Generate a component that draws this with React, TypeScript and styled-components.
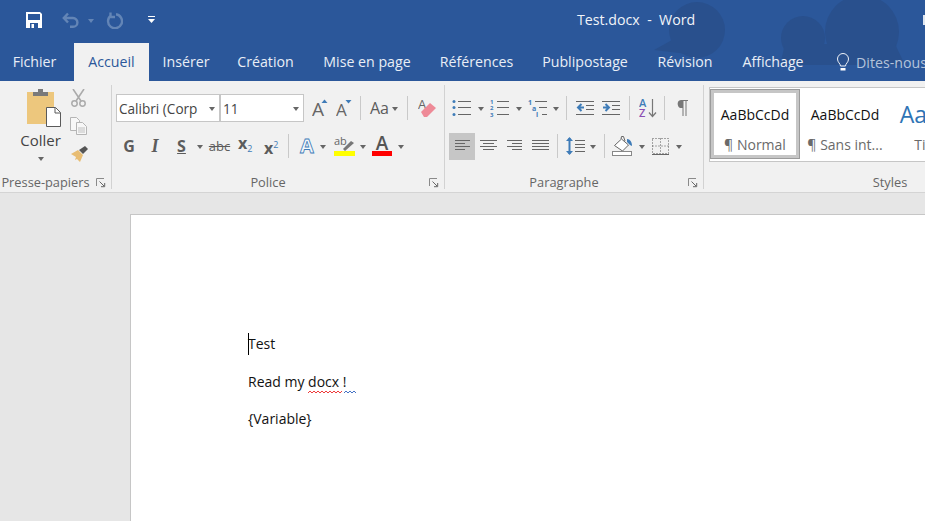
import React from "react";
import styled, { createGlobalStyle } from "styled-components";

const UI = `"Open Sans", "Noto Sans", sans-serif`;
const DOC = `"Open Sans", "Noto Sans", sans-serif`;
const BLUE = "#2b579a";
const GRAY = "#666666";
const ACCENT = "#3f7cb8";

const Global = createGlobalStyle`
  html, body { margin: 0; padding: 0; height: 521px; overflow: hidden; background: #e6e6e6; }
  #root { height: 521px; overflow: hidden; }
  * { box-sizing: border-box; }
`;

const Window = styled.div`
  width: 925px;
  height: 521px;
  display: flex;
  flex-direction: column;
  overflow: hidden;
  font-family: ${UI};
`;

/* header */
const Header = styled.header`
  position: relative;
  height: 81px;
  flex: none;
  background: ${BLUE};
  overflow: hidden;
`;
const Clouds = styled.svg`
  position: absolute;
  left: 0;
  top: 0;
`;
const TitleBar = styled.div`
  position: relative;
  height: 43px;
  display: flex;
  align-items: center;
  padding: 0 0 3px 26px;
`;
const Title = styled.div`
  position: absolute;
  left: 577px;
  top: 10px;
  color: #f1f4f9;
  font-size: 14.2px;
  line-height: 20px;
  white-space: pre;
`;
const WindowMark = styled.span`
  position: absolute;
  right: 0;
  top: 15px;
  width: 2px;
  height: 10px;
  background: #dfe6f0;
`;
const Tabs = styled.nav`
  position: relative;
  height: 38px;
  display: flex;
`;
const Tab = styled.div<{ $w: number; $active?: boolean }>`
  width: ${(p) => p.$w}px;
  flex: none;
  text-align: center;
  font-size: 14.2px;
  line-height: 37px;
  white-space: nowrap;
  color: ${(p) => (p.$active ? BLUE : "#e9eef6")};
  background: ${(p) => (p.$active ? "#f1f1f1" : "transparent")};
`;
const TabGap = styled.span`
  width: 5px;
  flex: none;
`;
const Search = styled.div`
  display: flex;
  align-items: center;
  margin-left: 16px;
  gap: 5px;
  color: #b4c4dc;
  font-size: 14.2px;
  white-space: nowrap;
`;

/* ribbon */
const Ribbon = styled.section`
  height: 112px;
  flex: none;
  display: flex;
  padding: 4px 0 3px;
  background: #f1f1f1;
  border-bottom: 1px solid #d4d4d4;
  overflow: hidden;
`;
const Group = styled.div<{ $w: number; $open?: boolean }>`
  position: relative;
  width: ${(p) => p.$w}px;
  flex: none;
  display: flex;
  flex-direction: column;
  border-right: ${(p) => (p.$open ? "none" : "1px solid #d2d2d2")};
`;
const GroupBody = styled.div`
  flex: 1;
  min-height: 0;
`;
const GroupLabel = styled.div`
  height: 14px;
  padding-right: 20px;
  text-align: center;
  color: ${GRAY};
  font-size: 12.8px;
  line-height: 14px;
  white-space: nowrap;
`;
const Launcher = styled.svg`
  position: absolute;
  right: 5px;
  bottom: 1px;
`;
const ClipBody = styled(GroupBody)`
  display: flex;
`;
const Paste = styled.div`
  width: 51px;
  margin-left: 15px;
  display: flex;
  flex-direction: column;
  align-items: center;
  padding-top: 4px;
`;
const PasteLabel = styled.div`
  margin-top: 3px;
  color: #444;
  font-size: 15px;
  line-height: 20px;
`;
const ClipTools = styled.div`
  margin-left: 4px;
  padding-top: 4px;
  display: flex;
  flex-direction: column;
  gap: 10px;
`;
const Rows = styled(GroupBody)<{ $pl?: number }>`
  padding: 9px 0 0 ${(p) => p.$pl ?? 0}px;
  display: flex;
  flex-direction: column;
  gap: 10px;
`;
const Row = styled.div`
  height: 28px;
  display: flex;
  align-items: center;
`;
const Combo = styled.div<{ $w: number; $ml?: number }>`
  width: ${(p) => p.$w}px;
  height: 28px;
  flex: none;
  margin-left: ${(p) => p.$ml ?? 0}px;
  display: flex;
  align-items: center;
  justify-content: space-between;
  padding: 0 4px 0 2px;
  background: #fff;
  border: 1px solid #c6c6c6;
  color: #444;
  font-family: ${DOC};
  font-size: 13.6px;
  white-space: nowrap;
`;
const Glyph = styled.svg<{ $ml?: number; $mt?: number }>`
  display: block;
  flex: none;
  margin-left: ${(p) => p.$ml ?? 0}px;
  margin-top: ${(p) => p.$mt ?? 0}px;
`;
const Caret = styled.span<{ $ml?: number; $mt?: number; $faded?: boolean }>`
  flex: none;
  width: 0;
  height: 0;
  margin-left: ${(p) => p.$ml ?? 0}px;
  margin-top: ${(p) => p.$mt ?? 0}px;
  border-left: 3.5px solid transparent;
  border-right: 3.5px solid transparent;
  border-top: 4px solid ${(p) => (p.$faded ? "#6385b6" : "#666")};
`;
const VSep = styled.span<{ $ml: number }>`
  flex: none;
  width: 1px;
  height: 24px;
  margin-left: ${(p) => p.$ml}px;
  background: #c9c9c9;
`;
const Tool = styled.span<{ $ml?: number; $w: number }>`
  flex: none;
  width: ${(p) => p.$w}px;
  margin-left: ${(p) => p.$ml ?? 0}px;
  text-align: center;
  color: #5c5c5c;
  font-size: 16px;
  line-height: 20px;
  white-space: nowrap;
`;
const BoldTool = styled(Tool)`
  font-weight: 700;
`;
const ItalicTool = styled(BoldTool)`
  font-style: italic;
  font-family: "Liberation Serif", serif;
  font-size: 18px;
`;
const UnderTool = styled(BoldTool)`
  text-decoration: underline;
`;
const StrikeTool = styled(Tool)`
  font-size: 13px;
  text-decoration: line-through;
`;
const Script = styled.span<{ $up?: boolean }>`
  color: ${ACCENT};
  font-size: 9px;
  font-weight: 400;
  vertical-align: ${(p) => (p.$up ? "6px" : "-3px")};
`;
const Pressed = styled.span<{ $ml: number }>`
  flex: none;
  width: 26px;
  height: 27px;
  margin-left: ${(p) => p.$ml}px;
  display: flex;
  align-items: center;
  justify-content: center;
  background: #c6c6c6;
`;

/* styles gallery */
const GalleryBody = styled(GroupBody)`
  padding: 2px 0 0 5px;
  overflow: hidden;
`;
const Gallery = styled.div`
  width: 500px;
  height: 75px;
  display: flex;
  padding: 1px 0 0;
  background: #fff;
  border: 1px solid #c6c6c6;
  border-right: none;
`;
const StyleItem = styled.div<{ $selected?: boolean }>`
  width: 90px;
  height: 70px;
  flex: none;
  display: flex;
  flex-direction: column;
  align-items: center;
  border: ${(p) => (p.$selected ? "4px solid #c6c6c6" : "4px solid transparent")};
  outline: ${(p) => (p.$selected ? "1px solid #9b9b9b" : "none")};
  outline-offset: -1px;
`;
const Sample = styled.div<{ $heading?: boolean }>`
  height: 42px;
  display: flex;
  align-items: center;
  font-family: ${DOC};
  font-size: ${(p) => (p.$heading ? "23px" : "14px")};
  color: ${(p) => (p.$heading ? "#2e74b5" : "#111")};
  white-space: nowrap;
`;
const StyleName = styled.div`
  color: #6a6a6a;
  font-size: 14px;
  line-height: 20px;
  white-space: nowrap;
`;

/* document */
const Workspace = styled.main`
  flex: 1;
  min-height: 0;
  padding: 21px 0 0 130px;
  background: #e6e6e6;
  overflow: hidden;
`;
const Page = styled.article`
  height: 400px;
  margin-right: -40px;
  padding: 119px 0 0 117px;
  background: #fff;
  border: 1px solid #c6c6c6;
  border-bottom: none;
`;
const Para = styled.p`
  position: relative;
  margin: 0 0 17.5px;
  color: #111;
  font-family: ${DOC};
  font-size: 14px;
  line-height: 20px;
`;
const Cursor = styled.span`
  position: absolute;
  left: 0;
  top: -1px;
  width: 1px;
  height: 22px;
  background: #000;
`;
const Flagged = styled.span`
  position: relative;
`;
const Squiggle = styled.svg`
  position: absolute;
  left: 0;
  bottom: -3px;
`;

const Bars = ({ ml, w, lines }: { ml?: number; w: number; lines: [number, number][] }) => (
  <Glyph $ml={ml} width={w} height={18} viewBox={`0 0 ${w} 18`}>
    {lines.map(([x, l], i) => (
      <rect key={i} x={x} y={3 + i * 3} width={l} height={1} fill="#666" />
    ))}
  </Glyph>
);

const ListLines = ({ x, w }: { x: number; w: number }) => (
  <>
    <rect x={x} y={2} width={w - x} height={1} fill="#666" />
    <rect x={x} y={8} width={w - x} height={1} fill="#666" />
    <rect x={x} y={15} width={w - x} height={1} fill="#666" />
  </>
);

const LauncherIcon = () => (
  <Launcher width={10} height={10} viewBox="0 0 10 10">
    <path d="M.5 8V.5H8" fill="none" stroke="#8a8a8a" />
    <path d="M3.5 3.5l4.5 4.5M8.7 5v3.7H5" fill="none" stroke="#666" />
  </Launcher>
);

export default function App() {
  return (
    <Window>
      <Global />
      <Header>
        <Clouds width={925} height={65} viewBox="0 0 925 65">
          <g fill="#29508d">
            <circle cx="697" cy="30" r="28" />
            <path d="M672 40l-18 10 34 4z" />
            <circle cx="803" cy="38" r="22" />
            <circle cx="862" cy="32" r="37" />
            <path d="M785 44h110l10 21H780z" />
          </g>
        </Clouds>
        <TitleBar>
          <Glyph width={16} height={16} viewBox="0 0 16 16">
            <path d="M0 0h14l2 2v14H0z" fill="#fff" />
            <rect x="2" y="2" width="12" height="6" fill={BLUE} />
            <rect x="4" y="11" width="8" height="5" fill={BLUE} />
            <rect x="5.5" y="12" width="2.5" height="4" fill="#fff" />
          </Glyph>
          <Glyph $ml={20} width={18} height={16} viewBox="0 0 18 16">
            <path d="M2 6h9a4.4 4.4 0 0 1 0 8.8H8M6 1.5 1.800 6 6 10.5" fill="none" stroke="#6385b6" strokeWidth="2.4" />
          </Glyph>
          <Caret $ml={8} $mt={2} $faded />
          <Glyph $ml={12} width={17} height={17} viewBox="0 0 17 17">
            <path d="M5 3.5a7 7 0 1 0 5-1.200M4.5 .5v4.5H9" fill="none" stroke="#6385b6" strokeWidth="2.4" />
          </Glyph>
          <Glyph $ml={25} width={7} height={8} viewBox="0 0 7 8">
            <path d="M0 0h7v1H0zM0 3h7L3.5 7z" fill="#fff" />
          </Glyph>
          <Title>Test.docx  -  Word</Title>
          <WindowMark />
        </TitleBar>
        <Tabs>
          <Tab $w={69}>Fichier</Tab>
          <TabGap />
          <Tab $w={75} $active>
            Accueil
          </Tab>
          <Tab $w={74}>Insérer</Tab>
          <Tab $w={85}>Création</Tab>
          <Tab $w={118}>Mise en page</Tab>
          <Tab $w={101}>Références</Tab>
          <Tab $w={116}>Publipostage</Tab>
          <Tab $w={84}>Révision</Tab>
          <Tab $w={92}>Affichage</Tab>
          <Search>
            <Glyph width={16} height={19} viewBox="0 0 16 19">
              <path d="M5.500 13c0-2.500-3-3.500-3-7a5.500 5.500 0 0 1 11 0c0 3.500-3 4.500-3 7z" fill="none" stroke="#eef2f8" />
              <rect x="5.5" y="15" width="5" height="2.5" fill="#fff" />
            </Glyph>
            <span>Dites-nous</span>
          </Search>
        </Tabs>
      </Header>

      <Ribbon>
        <Group $w={112}>
          <ClipBody>
            <Paste>
              <Glyph $ml={7} width={34} height={38} viewBox="0 0 34 38">
                <path d="M0 3h27v32H0z" fill="#edc77d" />
                <path d="M6 7V3h5V0h5v3h5v4z" fill="#7a7a7a" />
                <path d="M19.5 18.5h9l5 5v14h-14z" fill="#fff" stroke="#5a5a5a" />
                <path d="M28 18.5v5.500h5.500" fill="none" stroke="#5a5a5a" />
              </Glyph>
              <PasteLabel>Coller</PasteLabel>
              <Caret $mt={7} />
            </Paste>
            <ClipTools>
              <Glyph width={17} height={18} viewBox="0 0 17 18">
                <path d="M3 0l8 12M14 0L6 12" stroke="#ababab" strokeWidth="1.6" fill="none" />
                <circle cx="4.5" cy="14.5" r="2.7" fill="none" stroke="#ababab" strokeWidth="1.5" />
                <circle cx="12.5" cy="14.5" r="2.7" fill="none" stroke="#ababab" strokeWidth="1.5" />
              </Glyph>
              <Glyph width={17} height={18} viewBox="0 0 17 18">
                <path d="M.5.5h6l3 3v10h-9z" fill="#f7f7f7" stroke="#b5b5b5" />
                <path d="M6.5 5.5h6l4 4v8h-10z" fill="#f7f7f7" stroke="#b5b5b5" />
                <path d="M8 11h7M8 13h7M8 15h7" stroke="#c0c0c0" />
              </Glyph>
              <Glyph $ml={1} $mt={1} width={17} height={16} viewBox="0 0 17 16">
                <path d="M0 8l7-4 5 5-3 7-3-3-2 1 1-3z" fill="#e8bd73" />
                <path d="M8 4l4 4 5-5-3-3z" fill="#555" />
              </Glyph>
            </ClipTools>
          </ClipBody>
          <GroupLabel>Presse-papiers</GroupLabel>
          <LauncherIcon />
        </Group>

        <Group $w={333}>
          <Rows $pl={4}>
            <Row>
              <Combo $w={104}>
                Calibri (Corp
                <Caret $mt={1} />
              </Combo>
              <Combo $w={84}>
                11
                <Caret $mt={1} />
              </Combo>
              <Glyph $ml={8} width={16} height={18} viewBox="0 0 16 18">
                <text x="0" y="17" fontFamily={UI} fontSize="19" fill="#666">A</text>
                <path d="M9.5 4l3-3.500 3 3.500z" fill={ACCENT} />
              </Glyph>
              <Glyph $ml={8} width={16} height={18} viewBox="0 0 16 18">
                <text x="0" y="17" fontFamily={UI} fontSize="17" fill="#666">A</text>
                <path d="M9.5 1l3 3.500 3-3.500z" fill={ACCENT} />
              </Glyph>
              <VSep $ml={8} />
              <Tool $ml={9} $w={18}>Aa</Tool>
              <Caret $ml={4} $mt={1} />
              <VSep $ml={9} />
              <Glyph $ml={10} width={19} height={20} viewBox="0 0 19 20">
                <text x="0" y="11" fontFamily={UI} fontSize="13" fill="#666">A</text>
                <path d="M3 14l9-9 6 5-9 9H6z" fill="#ee8a97" />
              </Glyph>
            </Row>
            <Row>
              <BoldTool $ml={7} $w={12}>G</BoldTool>
              <ItalicTool $ml={15} $w={10}>I</ItalicTool>
              <UnderTool $ml={16} $w={11}>S</UnderTool>
              <Caret $ml={10} $mt={1} />
              <StrikeTool $ml={5} $w={23}>abc</StrikeTool>
              <BoldTool $ml={7} $w={14}>
                x<Script>2</Script>
              </BoldTool>
              <BoldTool $ml={12} $w={14}>
                x<Script $up>2</Script>
              </BoldTool>
              <VSep $ml={10} />
              <Glyph $ml={10} width={16} height={18} viewBox="0 0 16 18">
                <text x="8" y="16" textAnchor="middle" fontFamily={UI} fontWeight="700" fontSize="20" fill="#f4f8fc" stroke={ACCENT} strokeWidth="0.8">A</text>
              </Glyph>
              <Caret $ml={5} $mt={1} />
              <Glyph $ml={8} width={21} height={20} viewBox="0 0 21 20">
                <text x="0" y="9" fontFamily={UI} fontSize="11" fill="#666">ab</text>
                <path d="M9 13l8-8 3 2-9 8z" fill="#777" />
                <rect y="15" width="21" height="5" fill="#ffff00" />
              </Glyph>
              <Caret $ml={5} $mt={1} />
              <Glyph $ml={6} width={20} height={20} viewBox="0 0 20 20">
                <text x="10" y="14" textAnchor="middle" fontFamily={UI} fontWeight="600" fontSize="19" fill="#555">A</text>
                <rect y="15" width="20" height="5" fill="#ff0000" />
              </Glyph>
              <Caret $ml={6} $mt={1} />
            </Row>
          </Rows>
          <GroupLabel>Police</GroupLabel>
          <LauncherIcon />
        </Group>

        <Group $w={259}>
          <Rows>
            <Row>
              <Glyph $ml={7} width={19} height={18} viewBox="0 0 19 18">
                <ListLines x={6} w={19} />
                <circle cx="2" cy="2.5" r="1.5" fill={ACCENT} />
                <circle cx="2" cy="8.5" r="1.5" fill={ACCENT} />
                <circle cx="2" cy="15.5" r="1.5" fill={ACCENT} />
              </Glyph>
              <Caret $ml={7} $mt={1} />
              <Glyph $ml={6} width={19} height={18} viewBox="0 0 19 18">
                <ListLines x={7} w={19} />
                <g fontFamily={UI} fontSize="6" fontWeight="700" fill={ACCENT}>
                  <text x="0" y="5">1</text>
                  <text x="0" y="11">2</text>
                  <text x="0" y="18">3</text>
                </g>
              </Glyph>
              <Caret $ml={7} $mt={1} />
              <Glyph $ml={6} width={19} height={18} viewBox="0 0 19 18">
                <rect x="7" y="2" width="12" height="1" fill="#666" />
                <rect x="11" y="8" width="8" height="1" fill="#666" />
                <rect x="14" y="15" width="5" height="1" fill="#666" />
                <g fontFamily={UI} fontSize="7" fontWeight="700" fill={ACCENT}>
                  <text x="0" y="6">1</text>
                  <text x="4" y="12">a</text>
                  <text x="8" y="18">i</text>
                </g>
              </Glyph>
              <Caret $ml={6} $mt={1} />
              <VSep $ml={7} />
              <Glyph $ml={9} width={18} height={18} viewBox="0 0 18 18">
                <path d="M0 2h18v1H0zM10 6h8v1h-8zM10 10h8v1h-8zM0 15h18v1H0z" fill="#666" />
                <path d="M8 8.5H3M5.500 5L2 8.5 5.500 12" fill="none" stroke={ACCENT} strokeWidth="2" />
              </Glyph>
              <Glyph $ml={8} width={18} height={18} viewBox="0 0 18 18">
                <path d="M0 2h18v1H0zM10 6h8v1h-8zM10 10h8v1h-8zM0 15h18v1H0z" fill="#666" />
                <path d="M1 8.5h5M3.500 5L7 8.5 3.500 12" fill="none" stroke={ACCENT} strokeWidth="2" />
              </Glyph>
              <VSep $ml={9} />
              <Glyph $ml={9} width={18} height={20} viewBox="0 0 18 20">
                <text x="0" y="9" fontFamily={UI} fontWeight="600" fontSize="11" fill={ACCENT}>A</text>
                <text x="0" y="19" fontFamily={UI} fontWeight="600" fontSize="11" fill="#8b4fb3">Z</text>
                <path d="M13.5 1v17M10 14.500l3.500 4 3.500-4" fill="none" stroke="#777" strokeWidth="1.2" />
              </Glyph>
              <VSep $ml={7} />
              <Glyph $ml={11} width={12} height={16} viewBox="0 0 12 16">
                <path d="M5 0h7v1h-1.500V16H9.500V1H7.500V16H6.500V8a4 4 0 0 1-1.500-8z" fill="#777" />
              </Glyph>
            </Row>
            <Row>
              <Pressed $ml={4}>
                <Bars w={15} lines={[[0, 15], [0, 10], [0, 15], [0, 10]]} />
              </Pressed>
              <Bars ml={5} w={17} lines={[[0, 17], [3, 11], [0, 17], [3, 11]]} />
              <Bars ml={10} w={15} lines={[[0, 15], [5, 10], [0, 15], [5, 10]]} />
              <Bars ml={10} w={17} lines={[[0, 17], [0, 17], [0, 17], [0, 17]]} />
              <VSep $ml={8} />
              <Glyph $ml={8} width={19} height={20} viewBox="0 0 19 20">
                <path d="M9 4h10v1H9zM9 8h10v1H9zM9 11h10v1H9zM9 15h10v1H9z" fill="#666" />
                <path d="M3.5 2v16" stroke={ACCENT} strokeWidth="2" />
                <path d="M0 5l3.500-4L7 5zM0 15l3.500 4L7 15z" fill={ACCENT} />
              </Glyph>
              <Caret $ml={5} $mt={1} />
              <VSep $ml={8} />
              <Glyph $ml={7} width={21} height={20} viewBox="0 0 21 20">
                <path d="M2.500 9.500l7-6.500 7 6-6 6z" fill="#fff" stroke="#666" />
                <path d="M9 3l.5-2.500h2L13 5" fill="none" stroke="#666" />
                <path d="M15 3c3 0 5 3 5 7l-2-1-3-3z" fill={ACCENT} />
                <rect x="0.5" y="15.5" width="19" height="4" fill="#fff" stroke="#888" />
              </Glyph>
              <Caret $ml={6} $mt={1} />
              <Glyph $ml={7} width={17} height={17} viewBox="0 0 17 17">
                <path d="M.5 .5h16v15H.5zM8.500 .5v15M.5 8h16" fill="none" stroke="#555" strokeDasharray="1 2" />
                <path d="M0 16.5h17" stroke="#666" />
              </Glyph>
              <Caret $ml={7} $mt={1} />
            </Row>
          </Rows>
          <GroupLabel>Paragraphe</GroupLabel>
          <LauncherIcon />
        </Group>

        <Group $w={392} $open>
          <GalleryBody>
            <Gallery>
              <StyleItem $selected>
                <Sample>AaBbCcDd</Sample>
                <StyleName>¶ Normal</StyleName>
              </StyleItem>
              <StyleItem>
                <Sample>AaBbCcDd</Sample>
                <StyleName>¶ Sans int...</StyleName>
              </StyleItem>
              <StyleItem>
                <Sample $heading>AaBbC</Sample>
                <StyleName>Titre 1</StyleName>
              </StyleItem>
            </Gallery>
          </GalleryBody>
          <GroupLabel>Styles</GroupLabel>
        </Group>
      </Ribbon>

      <Workspace>
        <Page>
          <Para>
            <Cursor />
            Test
          </Para>
          <Para>
            Read my{" "}
            <Flagged>
              docx !
              <Squiggle width={48} height={4} viewBox="0 0 48 4">
                <path d="M0 3l2-2 2 2 2-2 2 2 2-2 2 2 2-2 2 2 2-2 2 2 2-2 2 2 2-2 2 2 2-2 2 2 2-2" fill="none" stroke="#ee3b3b" />
                <path d="M36 3l2-2 2 2 2-2 2 2 2-2 2 2" fill="none" stroke="#4472c4" />
              </Squiggle>
            </Flagged>
          </Para>
          <Para>{"{Variable}"}</Para>
        </Page>
      </Workspace>
    </Window>
  );
}
